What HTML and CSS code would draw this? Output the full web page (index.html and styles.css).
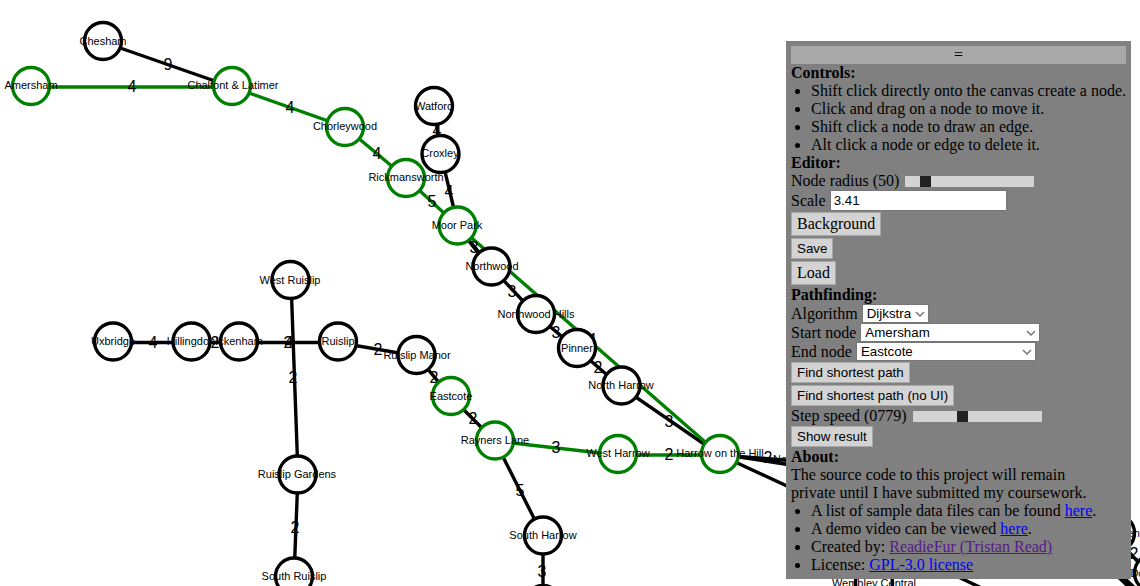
FILE: index.html
```html
<!DOCTYPE html>
<html lang="en">
<head>
<meta charset="utf-8">
<title>Pathfinding</title>
<link rel="stylesheet" href="styles.css">
</head>
<body>
<svg class="canvas" role="img" aria-label="Graph of stations">
  <g class="edges">
    <path d="M103 42 232 87M434 107 441 155 458 226M458 227 492 268 536 315 577 349 621 387 720 455"/>
    <path d="M457 226 491 269"/>
    <path d="M113 342.500H338L417 356 451 397 495 441"/>
    <path d="M291 281 298 475 294 577M495 441 543 536V604"/>
    <path d="M720 455 810 462M720 454 810 468M720 455 830 506"/>
    <path d="M950 573 990 592M1116 538 1153 578M1116 570 1140 593M1110 569 1134 592"/>
    <path class="route" d="M31 87H232L345 127 406 178 458 226 720 455M495 441 618 455H720"/>
  </g>
  <g class="weights">
    <text x="168" y="70">9</text>
    <text x="132" y="92">4</text>
    <text x="290" y="113">4</text>
    <text x="377" y="159">4</text>
    <text x="432" y="207">5</text>
    <text x="437" y="136">4</text>
    <text x="449" y="197">4</text>
    <text x="474" y="253">3</text>
    <text x="512" y="297">3</text>
    <text x="556" y="338">3</text>
    <text x="592" y="345">4</text>
    <text x="598" y="373">2</text>
    <text x="669" y="427">3</text>
    <text x="669" y="460">2</text>
    <text x="556" y="453">3</text>
    <text x="520" y="496">5</text>
    <text x="542" y="577">3</text>
    <text x="473" y="424">2</text>
    <text x="434" y="383">2</text>
    <text x="378" y="355">2</text>
    <text x="153" y="348">4</text>
    <text x="215" y="348">2</text>
    <text x="288" y="348">2</text>
    <text x="289" y="348">4</text>
    <text x="293" y="383">2</text>
    <text x="295" y="533">2</text>
    <text x="768" y="463">2</text>
    <text x="1134" y="559">2</text>
  </g>
  <g class="nodes">
    <g><circle cx="103" cy="41" r="18.5"/><text x="103" y="45">Chesham</text></g>
    <g class="visited"><circle cx="31" cy="86" r="18.5"/><text x="31" y="89">Amersham</text></g>
    <g class="visited"><circle cx="232" cy="86" r="18.5"/><text x="233" y="89">Chalfont &amp; Latimer</text></g>
    <g class="visited"><circle cx="345" cy="127" r="18.5"/><text x="345" y="130">Chorleywood</text></g>
    <g class="visited"><circle cx="406" cy="178" r="18.5"/><text x="406" y="181">Rickmansworth</text></g>
    <g><circle cx="434" cy="106" r="18.5"/><text x="434" y="110">Watford</text></g>
    <g><circle cx="440.500" cy="154" r="18.5"/><text x="440" y="157">Croxley</text></g>
    <g class="visited"><circle cx="457.500" cy="225.500" r="18.5"/><text x="457" y="229">Moor Park</text></g>
    <g><circle cx="491.500" cy="266.500" r="18.5"/><text x="492" y="270">Northwood</text></g>
    <g><circle cx="536" cy="314" r="18.5"/><text x="536" y="318">Northwood Hills</text></g>
    <g><circle cx="577" cy="348" r="18.5"/><text x="577" y="352">Pinner</text></g>
    <g><circle cx="621.500" cy="385.500" r="18.5"/><text x="621" y="389">North Harrow</text></g>
    <g class="visited"><circle cx="720" cy="454" r="18.5"/><text x="720" y="457">Harrow on the Hill</text></g>
    <g class="visited"><circle cx="618" cy="454" r="18.5"/><text x="618" y="457">West Harrow</text></g>
    <g class="visited"><circle cx="495" cy="440.500" r="18.5"/><text x="495" y="444">Rayners Lane</text></g>
    <g class="visited"><circle cx="451" cy="396" r="18.5"/><text x="451" y="400">Eastcote</text></g>
    <g><circle cx="416.500" cy="355" r="18.5"/><text x="417" y="359">Ruislip Manor</text></g>
    <g><circle cx="338" cy="341.500" r="18.5"/><text x="338" y="345">Ruislip</text></g>
    <g><circle cx="290.500" cy="280" r="18.5"/><text x="290" y="284">West Ruislip</text></g>
    <g><circle cx="113" cy="341.500" r="18.5"/><text x="113" y="345">Uxbridge</text></g>
    <g><circle cx="191.500" cy="341.500" r="18.5"/><text x="191" y="345">Hillingdon</text></g>
    <g><circle cx="239" cy="341.500" r="18.5"/><text x="239" y="345">Ickenham</text></g>
    <g><circle cx="297.500" cy="474.500" r="18.5"/><text x="297" y="478">Ruislip Gardens</text></g>
    <g><circle cx="294" cy="576.500" r="18.5"/><text x="294" y="580">South Ruislip</text></g>
    <g><circle cx="543" cy="535.500" r="18.5"/><text x="543" y="539">South Harrow</text></g>
    <g><circle cx="543" cy="604" r="18.5"/></g>
    <g><circle cx="810" cy="461" r="18.5"/><text x="810" y="463">Northwick Park</text></g>
    <g><circle cx="874" cy="583" r="18.5"/><text x="874" y="587">Wembley Central</text></g>
    <g><circle cx="1116" cy="533" r="18.5"/><text x="1116" y="537">Willesden</text></g>
    <g><circle cx="1153" cy="573" r="18.5"/><text x="1153" y="577">Dollis Hill</text></g>
  </g>
</svg>

<aside class="panel">
  <div class="handle">=</div>
  <b class="line">Controls:</b>
  <ul class="list">
    <li>Shift click directly onto the canvas create a node.</li>
    <li>Click and drag on a node to move it.</li>
    <li>Shift click a node to draw an edge.</li>
    <li>Alt click a node or edge to delete it.</li>
  </ul>
  <b class="line">Editor:</b>
  <div class="row"><label for="radius">Node radius (50)</label><input class="slider" id="radius" type="range" min="0" max="100" value="12"></div>
  <div class="row"><label for="scale">Scale</label><input class="field" id="scale" type="text" value="3.41"></div>
  <div class="row"><button class="button file" type="button">Background</button></div>
  <div class="row"><button class="button" type="button">Save</button></div>
  <div class="row"><button class="button file" type="button">Load</button></div>
  <b class="line">Pathfinding:</b>
  <div class="row"><label for="algorithm">Algorithm</label><select class="select" id="algorithm"><option>Dijkstra</option></select></div>
  <div class="row"><label for="start">Start node</label><select class="select wide" id="start"><option>Amersham</option></select></div>
  <div class="row"><label for="end">End node</label><select class="select wide" id="end"><option>Eastcote</option></select></div>
  <div class="row"><button class="button" type="button">Find shortest path</button></div>
  <div class="row"><button class="button" type="button">Find shortest path (no UI)</button></div>
  <div class="row"><label for="speed">Step speed (0779)</label><input class="slider" id="speed" type="range" min="0" max="100" value="38"></div>
  <div class="row"><button class="button" type="button">Show result</button></div>
  <b class="line">About:</b>
  <p class="line">The source code to this project will remain<br>private until I have submitted my coursework.</p>
  <ul class="list">
    <li>A list of sample data files can be found <a href="#samples">here</a>.</li>
    <li>A demo video can be viewed <a href="#demo">here</a>.</li>
    <li>Created by: <a class="seen" href="#author">ReadieFur (Tristan Read)</a></li>
    <li>License: <a href="#license">GPL-3.0 license</a></li>
  </ul>
</aside>
</body>
</html>
```
FILE: styles.css
```css
* { box-sizing: border-box; }

body {
  margin: 0;
  height: 100vh;
  overflow: hidden;
  background: white;
  color: black;
  font: 16px/18px "Liberation Serif", "Times New Roman", serif;
}

/* Graph */
.canvas {
  position: absolute;
  inset: 0;
  width: 100%;
  height: 100%;
  font-family: "Liberation Sans", Arial, sans-serif;
  text-anchor: middle;
}
.edges { fill: none; stroke: black; stroke-width: 3.4; }
.edges .route { stroke: green; }
.weights { font-size: 16px; }
.nodes { font-size: 11px; }
.nodes circle { fill: white; stroke: black; stroke-width: 3.4; }
.nodes .visited circle { stroke: green; }

/* Floating panel */
.panel {
  position: absolute;
  top: 41px;
  right: 9px;
  padding: 5px;
  background: gray;
}
.handle { background: darkgray; text-align: center; }
.line { display: block; margin: 0; }
.list { margin: 0; padding-left: 20px; }
.row { display: flex; align-items: center; gap: 4px; }

.panel a { color: #0000ee; }
.panel .seen { color: #551a8b; }

.button, .field, .select {
  font-family: "Liberation Sans", Arial, sans-serif;
  color: black;
  border-radius: 0;
}
.button {
  height: 21px;
  margin: 1px 0;
  padding: 0 5px;
  border: 1px solid darkgray;
  background: lightgray;
}
.button.file {
  height: 24px;
  font: inherit;
}
.field {
  width: 177px;
  height: 21px;
  padding: 1px 3px;
  border: 1px solid #767676;
  background: white;
}
.select {
  appearance: none;
  height: 19px;
  padding: 0 16px 0 4px;
  border: 1px solid #767676;
  background: white url("data:image/svg+xml,%3Csvg xmlns='http://www.w3.org/2000/svg' width='10' height='6'%3E%3Cpath d='M1 1l4 4 4-4' fill='none' stroke='%23767676' stroke-width='1.5'/%3E%3C/svg%3E") no-repeat right 3px center;
}
.select.wide { width: 180px; }

.slider {
  appearance: none;
  width: 129px;
  height: 11px;
  margin: 0 2px;
  background: lightgray;
}
.slider::-webkit-slider-thumb {
  appearance: none;
  width: 11px;
  height: 11px;
  background: #222;
}
```
